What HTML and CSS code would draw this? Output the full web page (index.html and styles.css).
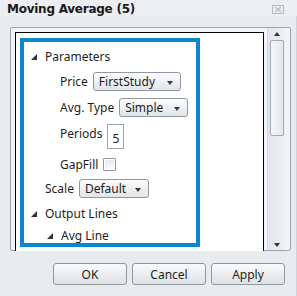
FILE: index.html
```html
<!DOCTYPE html>
<html>
<head>
<meta charset="utf-8">
<link rel="stylesheet" href="styles.css">
</head>
<body>
<div class="window">
  <div class="titlebar">
    <span class="title">Moving Average (5)</span>
    <svg class="close" width="12" height="9" viewBox="0 0 12 9">
      <rect x="0.5" y="0.5" width="11" height="8" fill="none" stroke="#b4bcc4"/>
      <path d="M3 2 L9 7 M9 2 L3 7" stroke="#b4bcc4" stroke-width="1.2"/>
    </svg>
  </div>
  <div class="content">
    <div class="panel">
      <div class="grid">
        <div class="sel">
          <div class="row r1 lvl0"><span class="tri"></span><span class="txt">Parameters</span></div>
          <div class="row r2 lvl1"><span class="lbl">Price</span><div class="combo c-first">FirstStudy<span class="arr"></span></div></div>
          <div class="row r3 lvl1"><span class="lbl">Avg. Type</span><div class="combo c-simple">Simple<span class="arr"></span></div></div>
          <div class="row r4 lvl1"><span class="lbl lbl-top">Periods</span><div class="tbox">5</div></div>
          <div class="row r5 lvl1"><span class="lbl">GapFill</span><div class="check"></div></div>
          <div class="row r6 lvl0b"><span class="lbl">Scale</span><div class="combo c-default">Default<span class="arr"></span></div></div>
          <div class="row r7 lvl0"><span class="tri"></span><span class="txt">Output Lines</span></div>
          <div class="row r8 lvl1t"><span class="tri"></span><span class="txt">Avg Line</span></div>
        </div>
      </div>
      <div class="scrollbar">
        <div class="sb-btn"><span class="sb-up"></span></div>
        <div class="thumb"></div>
        <div class="sb-fill"></div>
        <div class="sb-btn"><span class="sb-down"></span></div>
      </div>
    </div>
    <div class="buttons">
      <div class="btn">OK</div>
      <div class="btn">Cancel</div>
      <div class="btn">Apply</div>
    </div>
  </div>
</div>
</body>
</html>
```

FILE: styles.css
```css
html, body {
  margin: 0;
  padding: 0;
  background: #e9ecef;
}
.window {
  width: 297px;
  height: 296px;
  display: flex;
  flex-direction: column;
  font-family: "Noto Sans", "Open Sans", sans-serif;
  font-size: 12px;
  color: #1e1e1e;
  overflow: hidden;
}
.titlebar {
  height: 16px;
  flex: none;
  display: flex;
  align-items: center;
  justify-content: space-between;
  padding: 0 13px 0 7px;
  background: #eceef1;
}
.title {
  font-family: "DejaVu Sans", sans-serif;
  font-weight: bold;
  font-size: 12px;
  letter-spacing: -0.25px;
  color: #1a1a1a;
  line-height: 16px;
  padding-top: 2px;
}
.close {
  display: block;
  margin-top: 3px;
}
.content {
  flex: 1;
  display: flex;
  flex-direction: column;
  padding: 11px 0 0 10px;
  width: 286px;
  border-right: 1px solid #cdd3d9;
}
.panel {
  width: 279px;
  height: 222px;
  border: 1px solid #9aa4ae;
  border-radius: 2px;
  background: #f3f4f6;
  display: flex;
}
.grid {
  margin: 4px 0 0 4px;
  width: 247px;
  height: 218px;
  border: 1px solid #000;
  border-bottom: none;
  background: #fff;
  overflow: hidden;
  box-sizing: content-box;
}
.sel {
  margin: 5px 0 0 4px;
  width: 172px;
  height: 201px;
  border: 4px solid #0a87cf;
  display: flex;
  flex-direction: column;
}
.row {
  display: flex;
  align-items: center;
  flex: none;
}
.r1 { height: 28px; }
.r2 { height: 22px; }
.r3 { height: 30px; }
.r4 { height: 29px; }
.r5 { height: 27px; }
.r6 { height: 20px; }
.r7 { height: 30px; }
.r8 { height: 14px; }
.lvl0 { padding-left: 7px; }
.lvl0b { padding-left: 21px; }
.lvl1 { padding-left: 36px; }
.lvl1t { padding-left: 23px; }
.tri {
  width: 0;
  height: 0;
  border-style: solid;
  border-width: 0 0 6px 6px;
  border-color: transparent transparent #333 transparent;
  margin-right: 8px;
  margin-top: 1px;
}
.lbl {
  margin-right: 5px;
}
.lbl-top {
  align-self: flex-start;
  margin-top: 3px;
}
.combo {
  height: 17px;
  border: 1px solid #8d98a3;
  border-radius: 3px;
  background: linear-gradient(#fdfdfd, #eef0f2 50%, #e2e5e9);
  display: flex;
  align-items: center;
  padding-left: 5px;
  box-sizing: content-box;
  position: relative;
}
.c-first { width: 81px; }
.c-simple { width: 62px; }
.c-default { width: 63px; }
.arr {
  position: absolute;
  right: 7px;
  top: 8px;
  width: 0;
  height: 0;
  border-style: solid;
  border-width: 4px 3.5px 0 3.5px;
  border-color: #3a3a3a transparent transparent transparent;
}
.tbox {
  width: 15px;
  height: 22px;
  border: 1px solid #9aa4ae;
  background: #fff;
  display: flex;
  align-items: flex-end;
  justify-content: center;
  padding-bottom: 1px;
  box-sizing: content-box;
  line-height: 16px;
}
.check {
  width: 11px;
  height: 11px;
  border: 1px solid #8c98a4;
  border-radius: 1px;
  background: linear-gradient(#e4e8ec, #fafbfc);
  box-shadow: inset 0 0 0 1px #fff;
}
.scrollbar {
  margin-left: 3px;
  width: 17px;
  height: 222px;
  background: linear-gradient(90deg, #e3e6ea, #eef0f3);
  border-left: 1px solid #d4d9de;
  display: flex;
  flex-direction: column;
  align-items: center;
}
.sb-btn {
  height: 11px;
  width: 17px;
  display: flex;
  align-items: center;
  justify-content: center;
  flex: none;
}
.sb-up {
  width: 0; height: 0;
  border-style: solid;
  border-width: 0 3.5px 4px 3.5px;
  border-color: transparent transparent #333 transparent;
}
.sb-down {
  width: 0; height: 0;
  border-style: solid;
  border-width: 4px 3.5px 0 3.5px;
  border-color: #333 transparent transparent transparent;
}
.thumb {
  width: 14px;
  height: 96px;
  border: 1px solid #a3acb5;
  border-radius: 2px;
  background: linear-gradient(90deg, #f7f8f9, #e4e7eb);
  box-sizing: border-box;
  margin-top: 1px;
  flex: none;
}
.sb-fill { flex: 1; }
.buttons {
  display: flex;
  gap: 5px;
  padding-left: 43px;
  margin-top: 12px;
}
.btn {
  width: 72px;
  height: 20px;
  border: 1px solid #8f979f;
  border-radius: 3px;
  background: linear-gradient(#fbfbfc, #eceef0 50%, #dde1e5);
  display: flex;
  align-items: center;
  justify-content: center;
}
```
